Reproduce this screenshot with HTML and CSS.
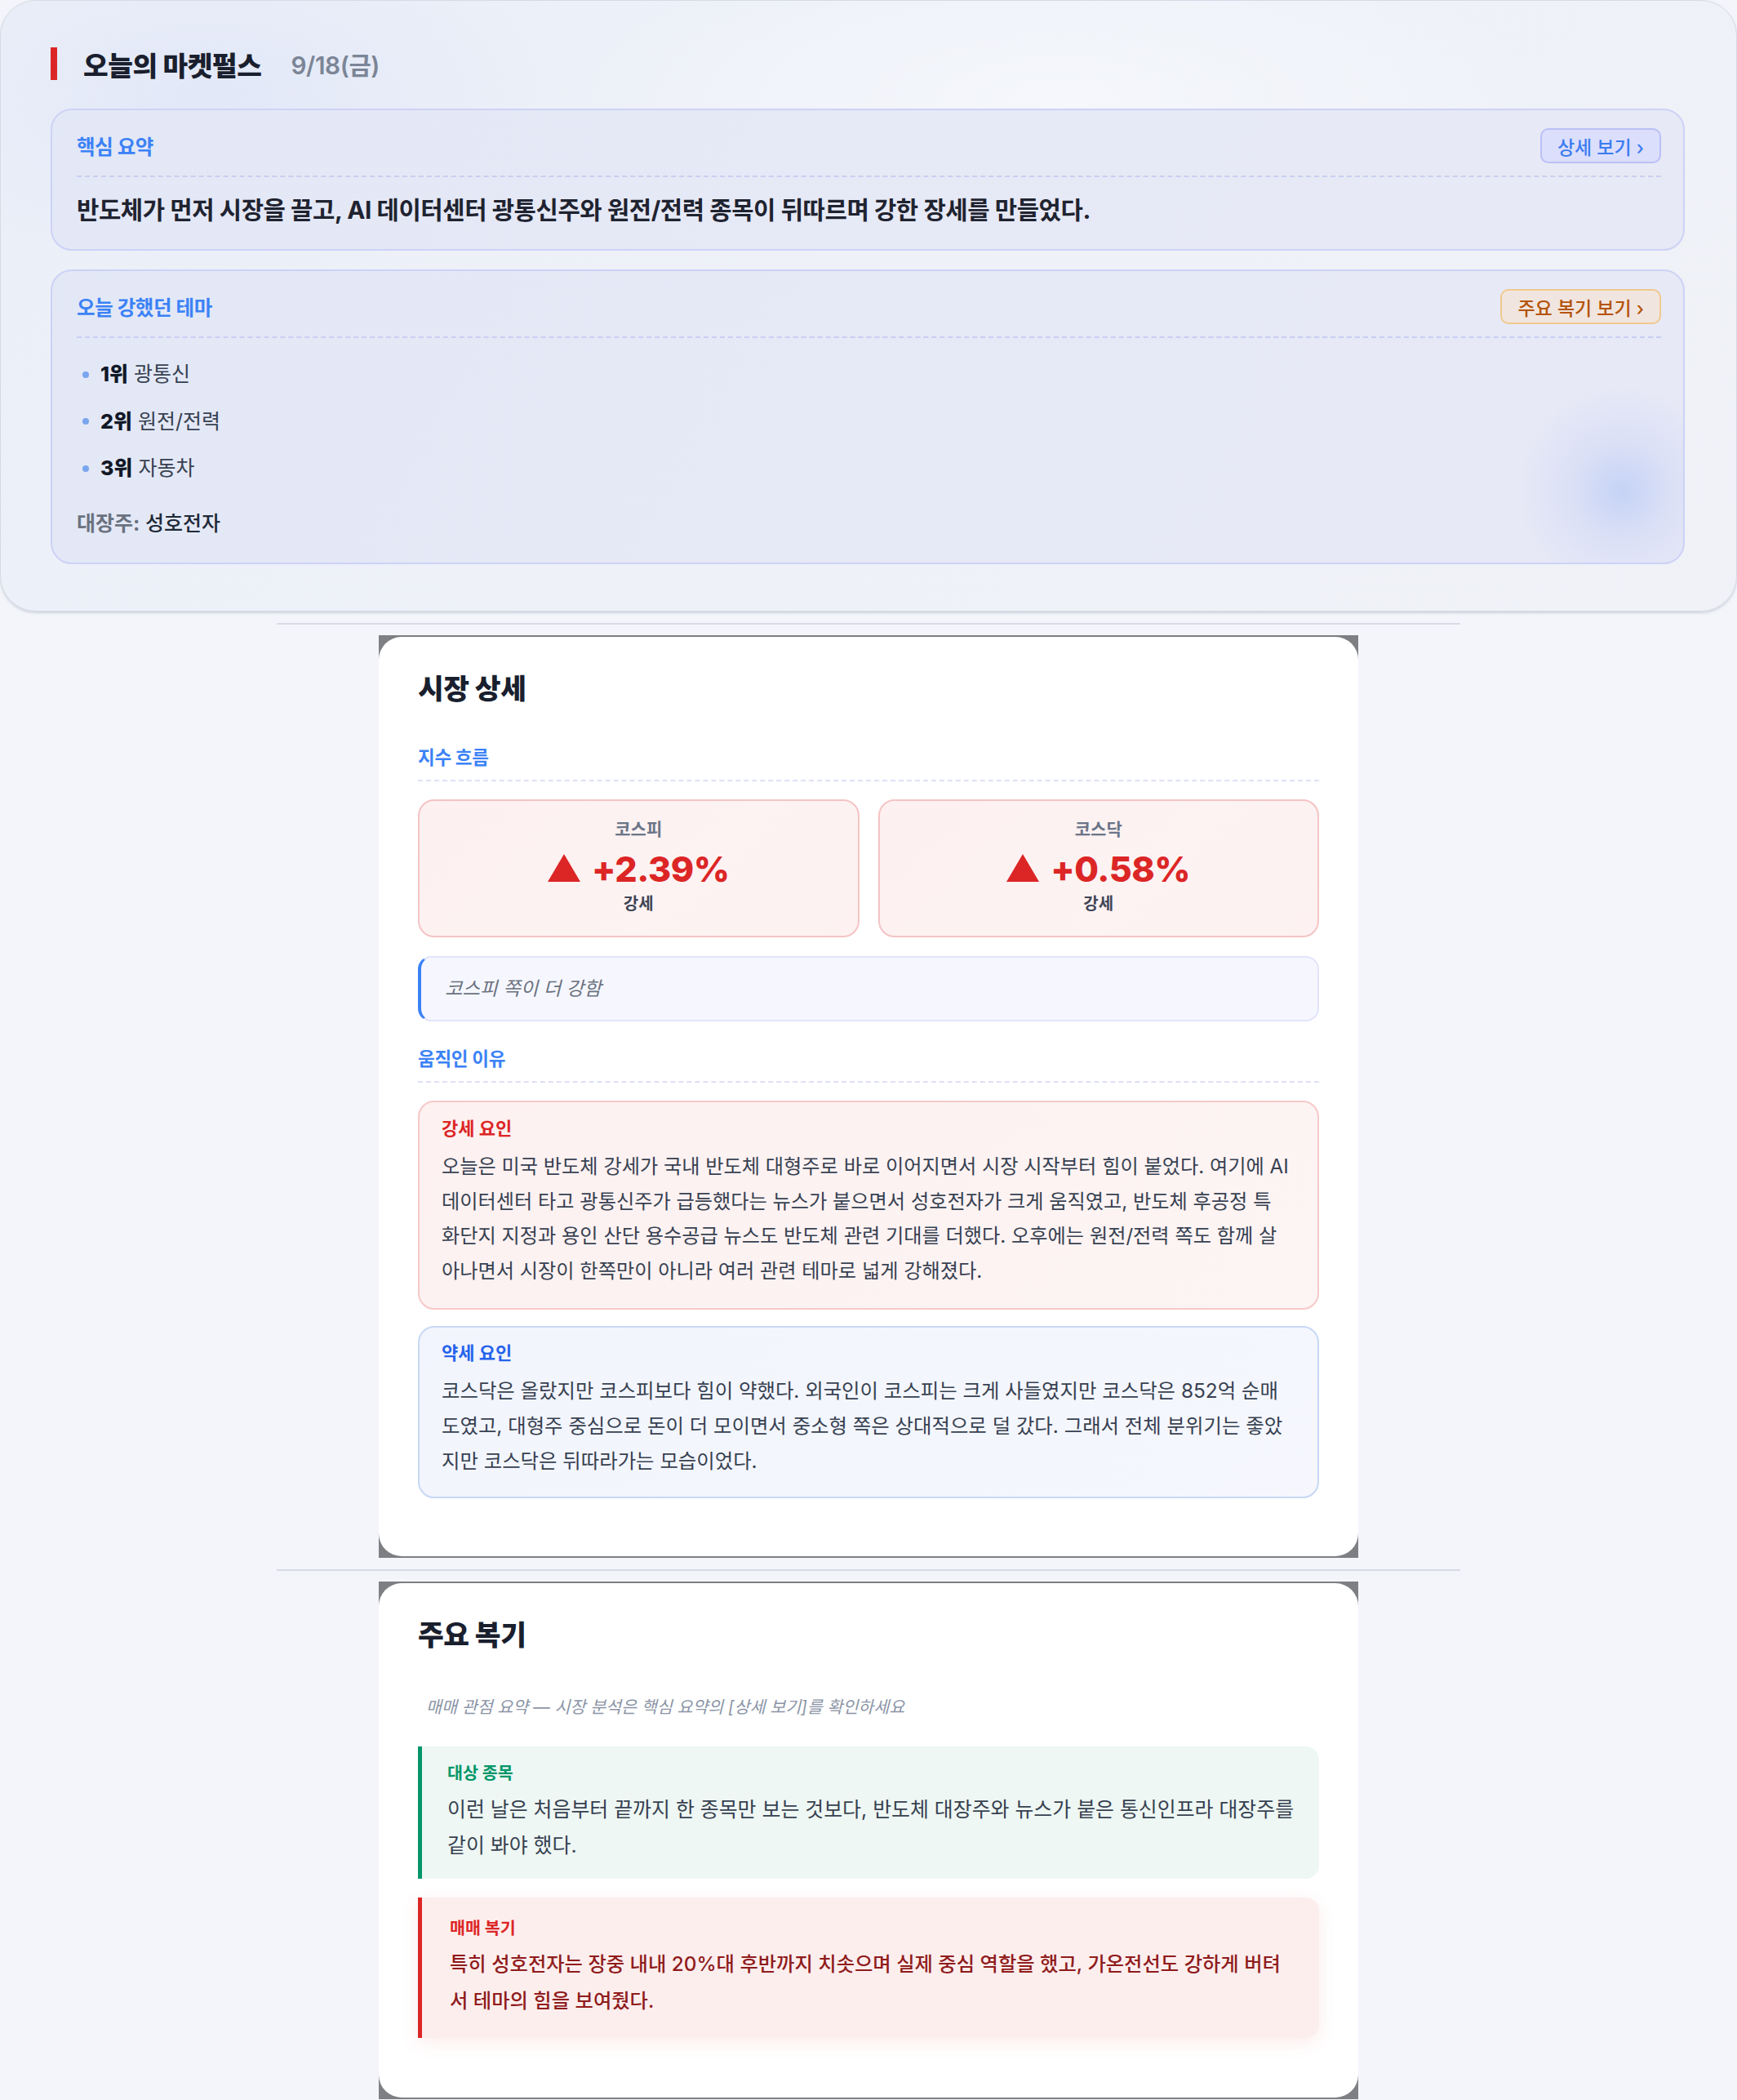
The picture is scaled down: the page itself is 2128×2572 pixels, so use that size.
FILE: index.html
```html
<!DOCTYPE html>
<html lang="ko">
<head>
<meta charset="utf-8">
<title>오늘의 마켓펄스</title>
<link rel="stylesheet" href="styles.css">
</head>
<body>
<section class="pulse">
  <h1 class="pulse-title"><span class="bar"></span><span class="title-text">오늘의 마켓펄스</span><span class="date">9/18(금)</span></h1>
  <div class="pbox">
    <div class="pbox-head"><span class="plabel">핵심 요약</span><span class="btn btn-blue">상세 보기 ›</span></div>
    <p class="summary">반도체가 먼저 시장을 끌고, AI 데이터센터 광통신주와 원전/전력 종목이 뒤따르며 강한 장세를 만들었다.</p>
  </div>
  <div class="pbox themes">
    <div class="pbox-head"><span class="plabel">오늘 강했던 테마</span><span class="btn btn-orange">주요 복기 보기 ›</span></div>
    <ul class="theme-list">
      <li><i class="dot"></i><span><b>1위</b> 광통신</span></li>
      <li><i class="dot"></i><span><b>2위</b> 원전/전력</span></li>
      <li><i class="dot"></i><span><b>3위</b> 자동차</span></li>
    </ul>
    <p class="leader"><span class="leader-k">대장주:</span> 성호전자</p>
  </div>
</section>

<hr class="sep">

<div class="frame">
  <article class="card">
    <h2 class="card-title">시장 상세</h2>
    <h3 class="sec-label">지수 흐름</h3>
    <div class="idx-grid">
      <div class="idx">
        <div class="idx-name">코스피</div>
        <div class="idx-val"><svg class="tri" width="40" height="34" viewBox="0 0 40 34"><path d="M20 0 L40 34 L0 34 Z" fill="#dc2626"/></svg><span>+2.39%</span></div>
        <div class="idx-state">강세</div>
      </div>
      <div class="idx">
        <div class="idx-name">코스닥</div>
        <div class="idx-val"><svg class="tri" width="40" height="34" viewBox="0 0 40 34"><path d="M20 0 L40 34 L0 34 Z" fill="#dc2626"/></svg><span>+0.58%</span></div>
        <div class="idx-state">강세</div>
      </div>
    </div>
    <div class="note">코스피 쪽이 더 강함</div>
    <h3 class="sec-label sec-gap">움직인 이유</h3>
    <div class="factor factor-up">
      <div class="factor-label">강세 요인</div>
      <p>오늘은 미국 반도체 강세가 국내 반도체 대형주로 바로 이어지면서 시장 시작부터 힘이 붙었다. 여기에 AI<br>데이터센터 타고 광통신주가 급등했다는 뉴스가 붙으면서 성호전자가 크게 움직였고, 반도체 후공정 특<br>화단지 지정과 용인 산단 용수공급 뉴스도 반도체 관련 기대를 더했다. 오후에는 원전/전력 쪽도 함께 살<br>아나면서 시장이 한쪽만이 아니라 여러 관련 테마로 넓게 강해졌다.</p>
    </div>
    <div class="factor factor-down">
      <div class="factor-label">약세 요인</div>
      <p>코스닥은 올랐지만 코스피보다 힘이 약했다. 외국인이 코스피는 크게 사들였지만 코스닥은 852억 순매도였고, 대형주 중심으로 돈이 더 모이면서 중소형 쪽은 상대적으로 덜 갔다. 그래서 전체 분위기는 좋았지만 코스닥은 뒤따라가는 모습이었다.</p>
    </div>
  </article>
</div>

<hr class="sep">

<div class="frame">
  <article class="card card-review">
    <h2 class="card-title">주요 복기</h2>
    <p class="hint">매매 관점 요약 — 시장 분석은 핵심 요약의 [상세 보기]를 확인하세요</p>
    <div class="rv rv-green">
      <div class="rv-label">대상 종목</div>
      <p>이런 날은 처음부터 끝까지 한 종목만 보는 것보다, 반도체 대장주와 뉴스가 붙은 통신인프라 대장주를 같이 봐야 했다.</p>
    </div>
    <div class="rv rv-red">
      <div class="rv-label">매매 복기</div>
      <p>특히 성호전자는 장중 내내 20%대 후반까지 치솟으며 실제 중심 역할을 했고, 가온전선도 강하게 버텨서 테마의 힘을 보여줬다.</p>
    </div>
  </article>
</div>
</body>
</html>
```

FILE: styles.css
```css
* { box-sizing: border-box; }

html, body {
  margin: 0;
  padding: 0;
}

body {
  background: #f3f5fa;
  font-family: Inter, "Noto Sans CJK KR", "Noto Sans", sans-serif;
  color: #1f2330;
}

p, h1, h2, h3, ul { margin: 0; padding: 0; }

/* ---------- top pulse card ---------- */
.pulse {
  border: 1px solid #d5dae4;
  border-radius: 44px;
  padding: 57px 63px 57px 61px;
  background:
    radial-gradient(ellipse 420px 220px at 260px 120px, rgba(225,231,248,0.9) 0, rgba(225,231,248,0) 100%),
    radial-gradient(ellipse 600px 200px at 1300px 120px, rgba(246,248,252,0.9) 0, rgba(246,248,252,0) 100%),
    linear-gradient(135deg, #ebeff8 0%, #eef1f8 50%, #f0f2f7 100%);
  box-shadow: 0 2px 3px rgba(140,150,170,0.35);
}

.pulse-title {
  display: flex;
  align-items: center;
  height: 40px;
  font-size: 33.3px;
  font-weight: 800;
  color: #1a1f2e;
  letter-spacing: -0.4px;
}

.bar {
  display: block;
  width: 8px;
  height: 40px;
  background: #dc2626;
  margin-right: 32px;
}

.date {
  margin-left: 36px;
  font-size: 29.7px;
  font-weight: 600;
  color: #7b8596;
  letter-spacing: -0.4px;
}

.pbox {
  margin-top: 35px;
  border: 2px solid #cdd2f6;
  border-radius: 26px;
  padding: 22px 27px 28px 30px;
  background: linear-gradient(120deg, #e3e8f6 0%, #e6e9f6 50%, #e8e9f6 100%);
}

.pbox.themes {
  margin-top: 23px;
  padding-bottom: 29px;
  background:
    radial-gradient(circle at 1923px 269px, rgba(196,210,246,0.95) 0, rgba(205,215,246,0.5) 60px, rgba(215,222,247,0) 130px),
    linear-gradient(120deg, #e3e8f6 0%, #e6e9f6 50%, #e8e9f6 100%);
}

.pbox-head {
  display: flex;
  align-items: center;
  justify-content: space-between;
  padding-bottom: 15px;
  border-bottom: 2px dashed #c9cef2;
}

.plabel {
  font-size: 24.5px;
  font-weight: 700;
  color: #3b82f6;
  letter-spacing: -0.4px;
}

.btn {
  display: inline-flex;
  align-items: center;
  height: 43px;
  padding: 0 19px;
  border-radius: 10px;
  border: 2px solid;
  font-size: 23px;
  font-weight: 500;
}

.btn-blue {
  background: #dcdffb;
  border-color: #b9c0f6;
  color: #3b7cf2;
}

.btn-orange {
  background: #f1e5df;
  border-color: #f0c98f;
  color: #b45309;
}

.summary {
  margin-top: 20px;
  font-size: 29.7px;
  line-height: 40px;
  font-weight: 700;
  color: #1f2330;
  letter-spacing: -0.4px;
}

.theme-list {
  list-style: none;
  margin-top: 26px;
}

.theme-list li {
  display: flex;
  align-items: center;
  font-size: 25px;
  line-height: 37px;
  color: #374151;
}

.theme-list li + li { margin-top: 20.5px; }

.theme-list b {
  font-weight: 800;
  color: #111827;
}

.dot {
  display: block;
  width: 8px;
  height: 8px;
  border-radius: 50%;
  background: #7aa5ef;
  margin: 0 14px 0 7px;
}

.leader {
  margin-top: 31px;
  font-size: 25px;
  line-height: 37px;
  font-weight: 500;
  color: #1f2937;
}

.leader-k {
  font-weight: 700;
  color: #6b7280;
}

/* ---------- separators ---------- */
.sep {
  width: 1450px;
  height: 0;
  border: 0;
  border-top: 2px solid #d6dbe5;
  margin: 14px auto 13px;
}

/* ---------- content cards ---------- */
.frame {
  width: 1200px;
  margin: 0 auto;
  padding: 2px 0;
  background: #7d7f83;
}

.card {
  background: #ffffff;
  border-radius: 28px;
  padding: 42px 48px 71px;
}

.card-review { padding-bottom: 73px; }

.card-title {
  font-size: 34.5px;
  line-height: 44px;
  font-weight: 800;
  color: #1a1f2e;
  letter-spacing: -0.4px;
}

.sec-label {
  margin-top: 47px;
  font-size: 22.5px;
  line-height: 30px;
  font-weight: 700;
  color: #3b82f6;
  padding-bottom: 12px;
  border-bottom: 2px dashed #dde0f8;
  margin-bottom: 22px;
  letter-spacing: -0.3px;
}

.sec-label.sec-gap { margin-top: 31px; }

.idx-grid {
  display: grid;
  grid-template-columns: 1fr 1fr;
  gap: 23px;
}

.idx {
  border: 2px solid #f5c4c4;
  border-radius: 20px;
  background: linear-gradient(135deg, #fdf0f0 0%, #fdf3f3 60%, #fdf1f1 100%);
  padding: 21px 10px 25px;
  text-align: center;
}

.idx-name {
  font-size: 21px;
  line-height: 28px;
  font-weight: 700;
  color: #6b7588;
}

.idx-val {
  display: flex;
  align-items: center;
  justify-content: center;
  gap: 14px;
  margin: 8px 0 3px;
  height: 52px;
  font-size: 43px;
  font-weight: 800;
  color: #dc2626;
  letter-spacing: -0.5px;
}

.tri { display: block; margin-top: -2px; }

.idx-state {
  font-size: 20px;
  line-height: 28px;
  font-weight: 600;
  color: #3f4656;
}

.note {
  margin-top: 23px;
  border: 2px solid #e1e4fb;
  border-left: 4px solid #3b82f6;
  border-radius: 16px;
  background: #f6f7fe;
  padding: 22px 28px 22px 29px;
  font-size: 23.4px;
  line-height: 32px;
  font-style: italic;
  color: #6b7280;
}

.factor {
  border: 2px solid;
  border-radius: 20px;
  padding: 18px 28px 23px 27px;
}

.factor + .factor { margin-top: 20px; }

.factor-up {
  border-color: #f6c9c9;
  background: linear-gradient(135deg, #fdf1f1 0%, #fdf4f4 100%);
}

.factor-down {
  border-color: #c8d8f5;
  background: linear-gradient(135deg, #f2f5fd 0%, #f5f7fd 100%);
  padding-top: 17px;
  padding-bottom: 22px;
}

.factor-label {
  font-size: 22px;
  line-height: 28px;
  font-weight: 700;
  margin-bottom: 12px;
}

.factor-down .factor-label { margin-bottom: 11px; }

.factor-up .factor-label { color: #dc2626; }
.factor-down .factor-label { color: #2563eb; }

.factor p {
  font-size: 24.4px;
  line-height: 42.67px;
  color: #374151;
}

.factor-up p {
  font-size: 24.2px;
  white-space: nowrap;
}

.factor-down p { line-height: 43px; }

/* ---------- review ---------- */
.hint {
  margin-top: 52px;
  padding-left: 10px;
  font-size: 20.6px;
  line-height: 28px;
  font-style: italic;
  color: #8b94a6;
}

.rv {
  border-radius: 0 16px 16px 0;
  border-left: 5px solid;
}

.rv-green {
  margin-top: 34px;
  background: #eef7f3;
  border-left-color: #059669;
  padding: 19px 30px 19px 31px;
}

.rv-red {
  margin-top: 23px;
  background: #fdeeee;
  border-left-color: #dc2626;
  padding: 24px 30px 22.5px 34px;
  box-shadow: 0 6px 22px rgba(239, 68, 68, 0.10);
}

.rv-label {
  font-size: 20.6px;
  line-height: 28px;
  font-weight: 700;
}

.rv-green .rv-label { color: #059669; margin-bottom: 8px; }
.rv-red .rv-label { color: #dc2626; margin-bottom: 7.5px; }

.rv p {
  font-size: 24.9px;
  line-height: 44px;
  color: #374151;
}

.rv-red p {
  font-size: 24.3px;
  line-height: 45px;
  font-weight: 500;
  color: #8f1c1c;
}
```
